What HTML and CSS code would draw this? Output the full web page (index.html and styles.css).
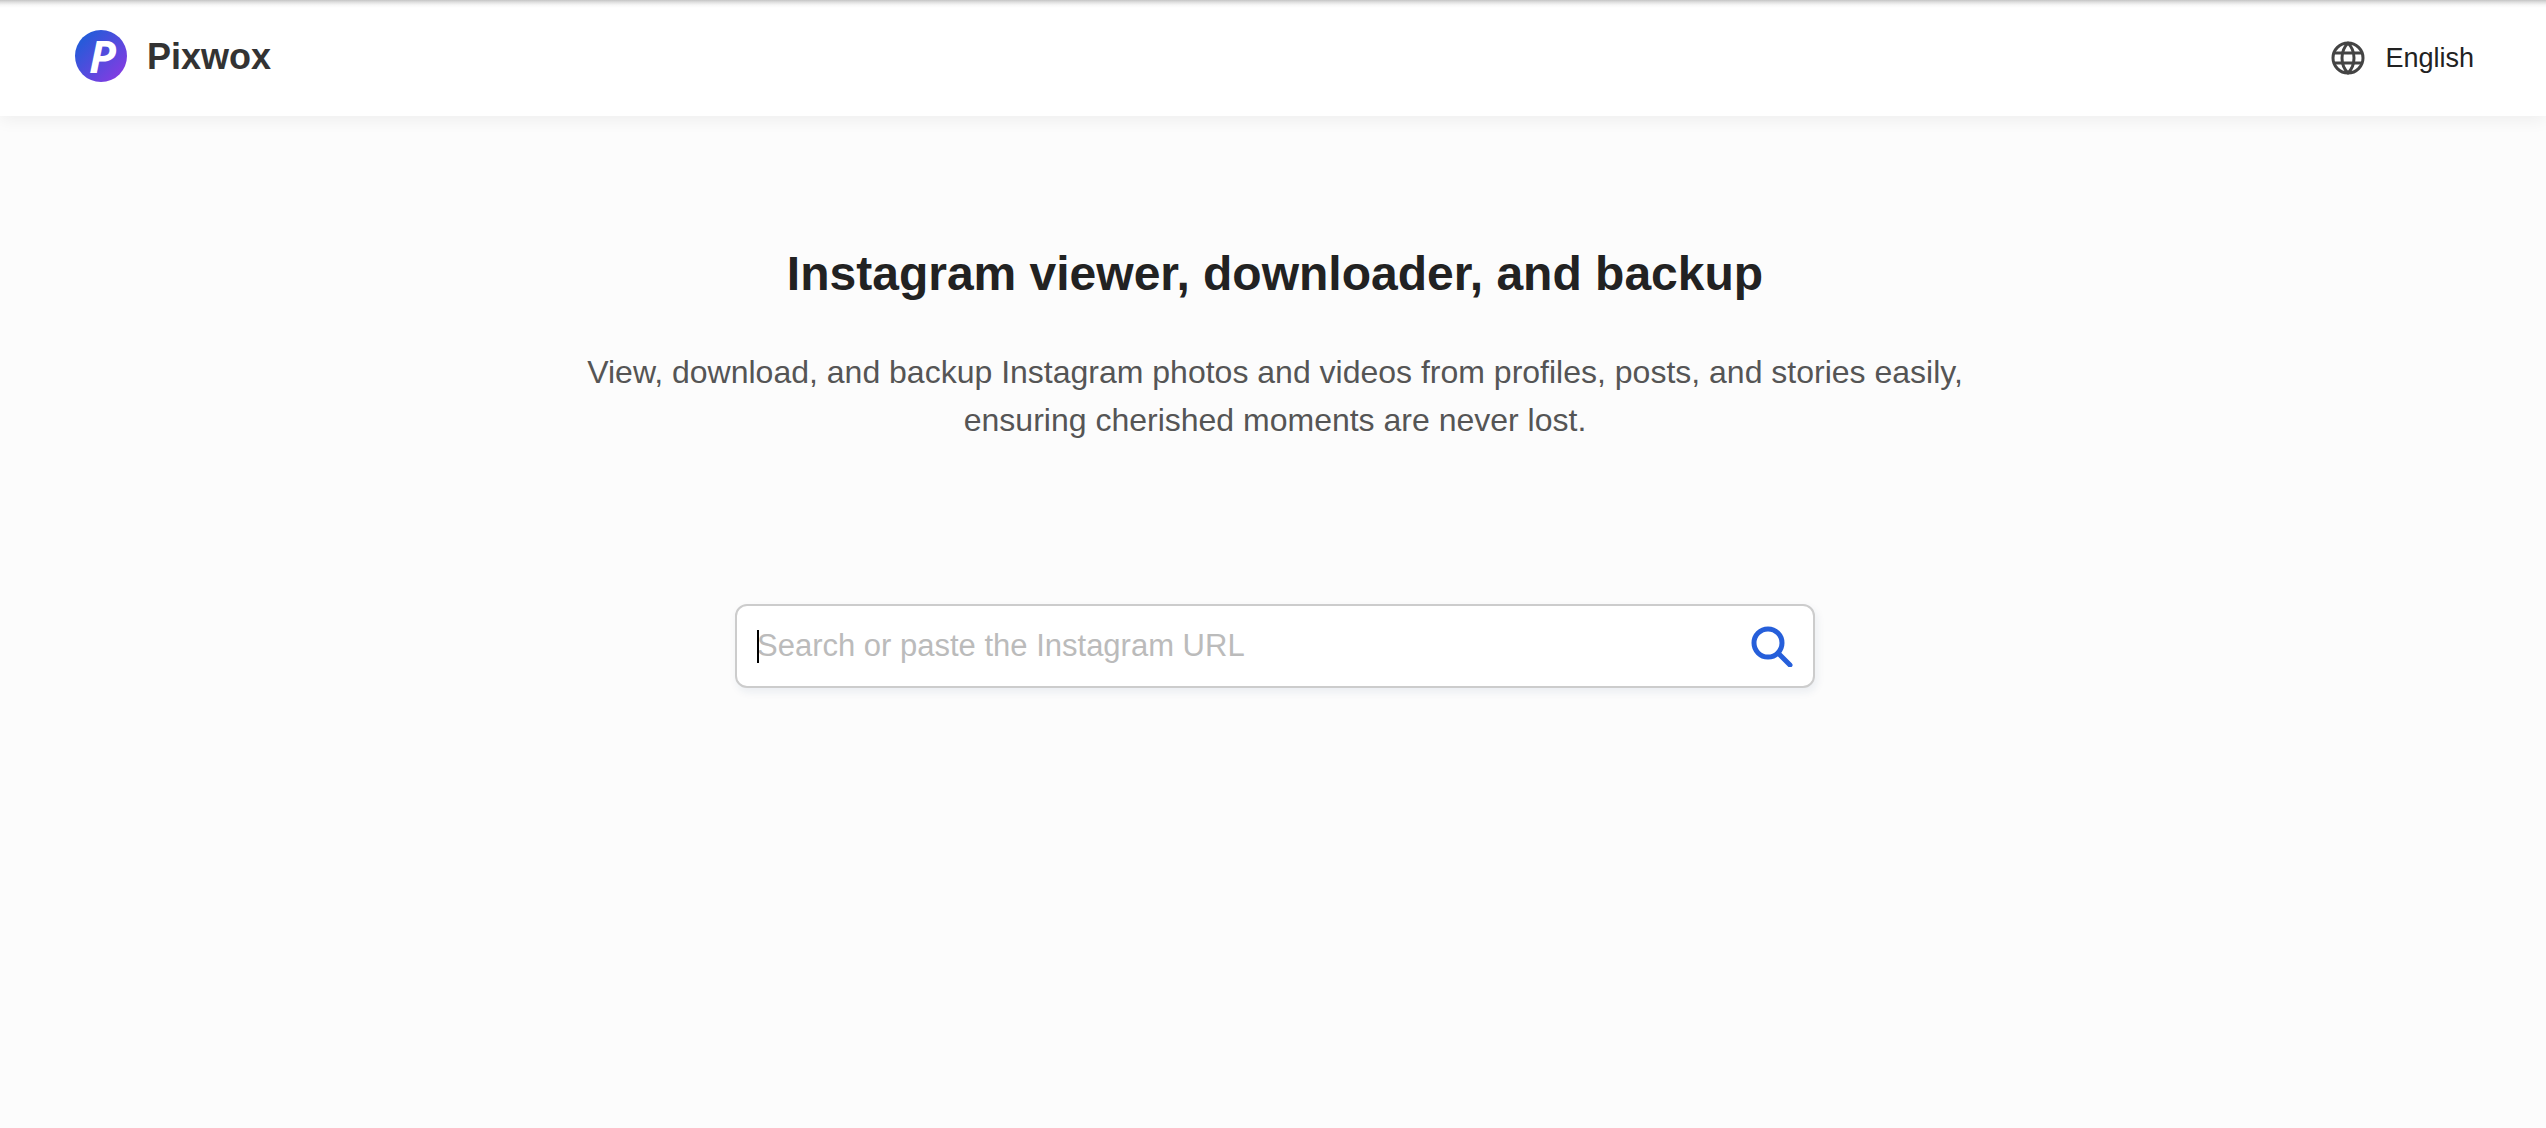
FILE: index.html
```
<!DOCTYPE html>
<html lang="en">
<head>
    <meta charset="UTF-8">
    <meta name="viewport" content="width=device-width, initial-scale=1.0">
    <title>Pixwox - Instagram viewer, downloader, and backup</title>
    <link rel="stylesheet" href="styles.css">
</head>
<body>

    <header class="header">
        <a class="brand" href="/">
            <svg class="brand-logo" viewBox="0 0 52 52" aria-hidden="true">
                <defs>
                    <linearGradient id="logoFill" x1="0" y1="0" x2="1" y2="1">
                        <stop offset="0.15" stop-color="#245bd9"/>
                        <stop offset="0.9" stop-color="#853be2"/>
                    </linearGradient>
                </defs>
                <circle cx="26" cy="26" r="26" fill="url(#logoFill)"/>
                <text class="logo-letter" x="14" y="43">P</text>
            </svg>
            <span class="brand-name">Pixwox</span>
        </a>

        <button class="language-button" type="button">
            <svg class="globe-icon" viewBox="0 0 34 34" aria-hidden="true">
                <circle cx="17" cy="17" r="15"/>
                <path d="M17 2C9 10 9 24 17 32C25 24 25 10 17 2Z"/>
                <path d="M3 12H31M3 22H31"/>
            </svg>
            English
        </button>
    </header>

    <main class="main">
        <h1>Instagram viewer, downloader, and backup</h1>
        <p class="description">View, download, and backup Instagram photos and videos from profiles, posts, and stories easily, ensuring cherished moments are never lost.</p>

        <form class="search-form" role="search">
            <span class="caret"></span>
            <input class="search-input" type="text" placeholder="Search or paste the Instagram URL" aria-label="Search or paste the Instagram URL">
            <button class="search-button" type="submit" aria-label="Search">
                <svg class="search-icon" viewBox="0 0 42 42" aria-hidden="true">
                    <circle cx="17" cy="18" r="14"/>
                    <path d="M27 28L39 40"/>
                </svg>
            </button>
        </form>
    </main>

</body>
</html>
```

FILE: styles.css
```
* {
    box-sizing: border-box;
}

body {
    font-family: "Helvetica Neue", "Liberation Sans", Arial, sans-serif;
    background-color: #fcfcfc;
    color: #222;
    margin: 0;
}

.header {
    display: flex;
    justify-content: space-between;
    padding: 30px 72px 34px 75px;
    background: linear-gradient(#c4c4c4, #ddd 2px, #f7f7f7 5px, #fff 8px);
    box-shadow: 0 4px 16px rgba(0, 0, 0, 0.06);
}

.brand {
    display: flex;
    align-items: center;
    gap: 20px;
    color: #333;
    text-decoration: none;
}

.brand-logo {
    width: 52px;
    height: 52px;
    overflow: visible;
}

.logo-letter {
    font-family: "Open Sans", sans-serif;
    font-size: 44px;
    font-style: italic;
    font-weight: 700;
    fill: #fff;
}

.brand-name {
    padding-top: 2px;
    font-size: 36px;
    font-weight: 700;
}

.language-button {
    display: flex;
    align-items: center;
    gap: 20px;
    padding: 4px 0 0;
    border: none;
    background: none;
    color: #222;
    font-family: inherit;
    font-size: 27px;
    cursor: pointer;
}

.globe-icon {
    width: 34px;
    height: 34px;
    fill: none;
    stroke: #444;
    stroke-width: 3;
    stroke-linejoin: round;
}

.main {
    display: flex;
    flex-direction: column;
    align-items: center;
    padding: 124px 40px 124px 44px;
}

h1 {
    margin: 0;
    font-size: 48px;
    line-height: 68px;
    text-align: center;
}

.description {
    max-width: 1440px;
    margin: 40px 0 0;
    color: #555;
    font-size: 32px;
    line-height: 48px;
    text-align: center;
}

.search-form {
    position: relative;
    display: flex;
    align-items: center;
    width: 100%;
    max-width: 1080px;
    height: 84px;
    margin-top: 160px;
    padding: 0 20px;
    background-color: #fff;
    border: 2px solid #ccc;
    border-radius: 12px;
    box-shadow: 2px 4px 8px rgba(30, 60, 120, 0.08);
}

/* text cursor over the placeholder */
.caret {
    position: absolute;
    left: 20px;
    top: 24px;
    width: 2px;
    height: 33px;
    background-color: #000;
}

.search-input {
    flex: 1;
    padding: 0;
    border: none;
    outline: none;
    background: none;
    color: #222;
    caret-color: transparent;
    font-family: inherit;
    font-size: 31px;
}

.search-input::placeholder {
    color: #bbb;
}

.search-button {
    display: flex;
    padding: 0;
    border: none;
    background: none;
    cursor: pointer;
}

.search-icon {
    width: 42px;
    height: 42px;
    fill: none;
    stroke: #265fda;
    stroke-width: 5;
    stroke-linecap: round;
}
```
